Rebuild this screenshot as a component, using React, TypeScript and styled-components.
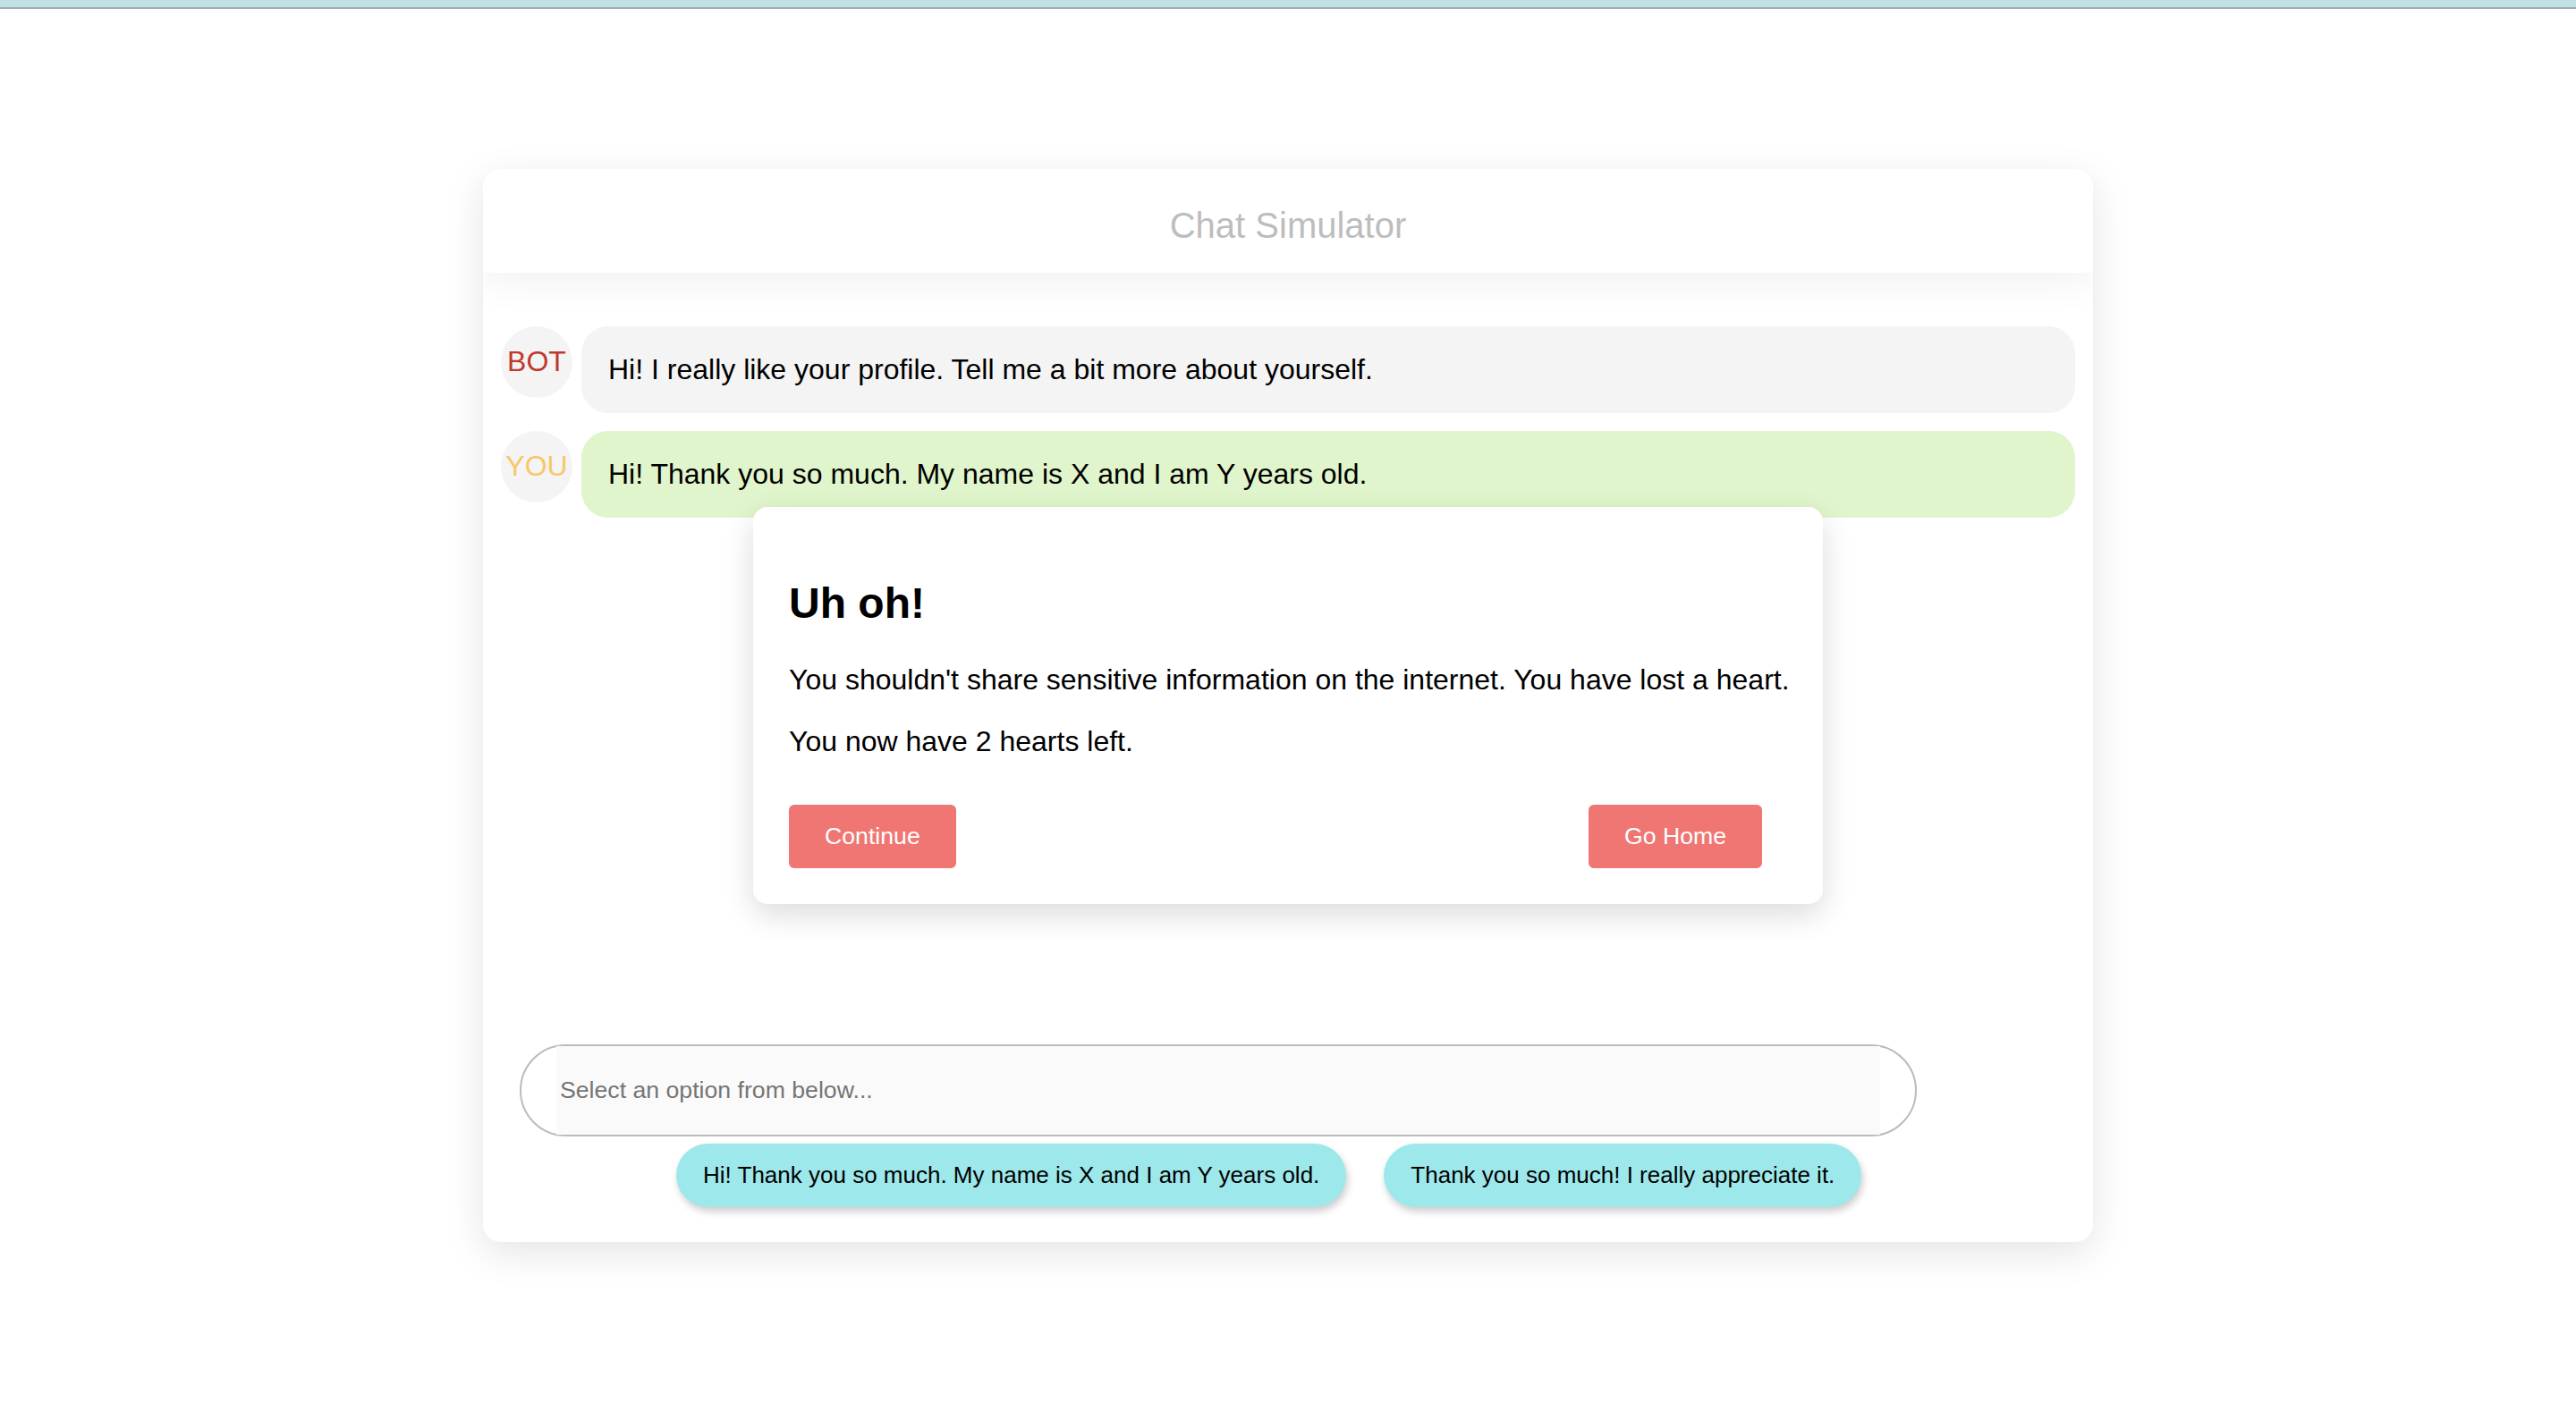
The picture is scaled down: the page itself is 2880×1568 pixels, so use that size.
import React from "react";
import styled, { createGlobalStyle } from "styled-components";

const GlobalStyle = createGlobalStyle`
  html, body {
    margin: 0;
    padding: 0;
    background: #ffffff;
    font-family: "Liberation Sans", Arial, Helvetica, sans-serif;
    color: #000;
  }
  * { box-sizing: border-box; }
`;

const TopBar = styled.div`
  height: 10px;
  background: #bfe1e3;
  border-bottom: 2px solid #9cb0b3;
`;

const Page = styled.div`
  position: relative;
  min-height: 1558px;
  padding-top: 179px;
`;

const Card = styled.div`
  width: 1800px;
  height: 1200px;
  margin: 0 auto;
  background: #fff;
  border-radius: 20px;
  box-shadow: 0 12px 44px rgba(0, 0, 0, 0.11);
  display: flex;
  flex-direction: column;
  overflow: hidden;
`;

const Header = styled.div`
  height: 116px;
  flex: 0 0 auto;
  display: flex;
  align-items: center;
  justify-content: center;
  padding-top: 10px;
  font-size: 40px;
  color: #bdbdbe;
  background: #fff;
  position: relative;
  z-index: 1;
  box-shadow: 0 12px 40px rgba(0, 0, 0, 0.055);
`;

const Messages = styled.div`
  flex: 1;
  display: flex;
  flex-direction: column;
  gap: 20px;
  padding: 60px 20px 0;
`;

const Row = styled.div`
  display: flex;
  align-items: flex-start;
  gap: 10px;
`;

const Avatar = styled.div<{ $color: string }>`
  flex: 0 0 80px;
  width: 80px;
  height: 80px;
  border-radius: 50%;
  background: #f4f4f4;
  color: ${(p) => p.$color};
  font-size: 32px;
  display: flex;
  align-items: center;
  justify-content: center;
  padding-bottom: 2px;
`;

const Bubble = styled.div<{ $bg: string }>`
  flex: 1;
  background: ${(p) => p.$bg};
  border-radius: 30px;
  padding: 30px 30px 30px;
  font-size: 32px;
`;

const InputBar = styled.div`
  flex: 0 0 auto;
  margin-left: 41px;
  width: 1562px;
  height: 103px;
  border: 2px solid #bbbbbb;
  border-radius: 52px;
  padding: 0 39px;
  display: flex;
`;

const TextInput = styled.input`
  flex: 1;
  height: 100%;
  border: none;
  outline: none;
  background: #fafafa;
  font-family: "Liberation Sans", Arial, sans-serif;
  font-size: 26.67px;
  padding: 0 4px;
  color: #000;
  &::placeholder {
    color: #757575;
  }
`;

const Options = styled.div`
  display: flex;
  gap: 42px;
  padding: 8px 0 39px 216px;
`;

const OptionButton = styled.button`
  background: #9de8ea;
  border: none;
  border-radius: 36px;
  height: 71px;
  padding: 0 30px;
  font-family: "Liberation Sans", Arial, sans-serif;
  font-size: 26px;
  color: #000;
  box-shadow: 2px 5px 8px rgba(0, 0, 0, 0.2);
  cursor: pointer;
`;

const Modal = styled.div`
  position: absolute;
  top: 557px;
  left: 50%;
  transform: translateX(-50%);
  width: 1196px;
  background: #fff;
  border-radius: 16px;
  padding: 40px;
  font-size: 32px;
  box-shadow: 0 12px 34px rgba(0, 0, 0, 0.14);
`;

const ModalTitle = styled.h2`
  font-size: 48px;
  font-weight: 700;
  margin: 40px 0;
`;

const ModalText = styled.p`
  margin: 32px 0;
  white-space: nowrap;
`;

const ModalActions = styled.div`
  display: flex;
  justify-content: space-between;
  margin-top: 52px;
  padding-right: 28px;
`;

const ActionButton = styled.button`
  background: #ef7673;
  color: #fff;
  border: none;
  border-radius: 6px;
  padding: 20px 40px;
  font-family: "Liberation Sans", Arial, sans-serif;
  font-size: 26.67px;
  cursor: pointer;
`;

const messages = [
  { who: "BOT", color: "#c0392b", bg: "#f4f4f4", text: "Hi! I really like your profile. Tell me a bit more about yourself." },
  { who: "YOU", color: "#f7c86b", bg: "#e0f5cb", text: "Hi! Thank you so much. My name is X and I am Y years old." },
];

const options = [
  "Hi! Thank you so much. My name is X and I am Y years old.",
  "Thank you so much! I really appreciate it.",
];

export default function App() {
  return (
    <>
      <GlobalStyle />
      <TopBar />
      <Page>
        <Card>
          <Header>Chat Simulator</Header>
          <Messages>
            {messages.map((m) => (
              <Row key={m.who}>
                <Avatar $color={m.color}>{m.who}</Avatar>
                <Bubble $bg={m.bg}>{m.text}</Bubble>
              </Row>
            ))}
          </Messages>
          <InputBar>
            <TextInput placeholder="Select an option from below..." readOnly />
          </InputBar>
          <Options>
            {options.map((o) => (
              <OptionButton key={o}>{o}</OptionButton>
            ))}
          </Options>
        </Card>
        <Modal>
          <ModalTitle>Uh oh!</ModalTitle>
          <ModalText>You shouldn't share sensitive information on the internet. You have lost a heart.</ModalText>
          <ModalText>You now have 2 hearts left.</ModalText>
          <ModalActions>
            <ActionButton>Continue</ActionButton>
            <ActionButton>Go Home</ActionButton>
          </ModalActions>
        </Modal>
      </Page>
    </>
  );
}
